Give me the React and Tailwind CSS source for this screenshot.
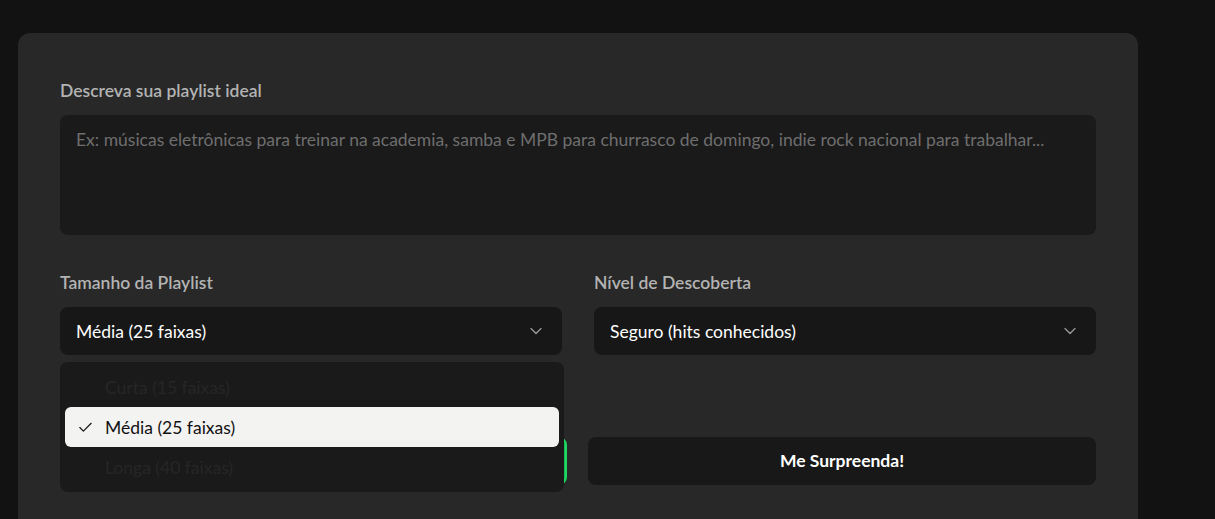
import React from "react";
import { ChevronDown, Check } from "lucide-react";

const font = { fontFamily: '"Segoe UI", Lato, "Noto Sans", sans-serif' };

function SelectBox({ label, value, open }) {
  return (
    <div className="relative">
      <label className="block text-[17.5px] leading-6 font-semibold text-[#b3b3b3] mb-3">
        {label}
      </label>
      <div className="flex items-center justify-between h-12 rounded-lg bg-[#171717] pl-4 pr-4 text-white text-[17.5px]">
        <span className="pt-[2px]">{value}</span>
        <ChevronDown size={20} strokeWidth={1.5} className="text-[#9a9a9a]" />
      </div>
      {open && (
        <div className="absolute left-0 top-[91px] w-[504px] z-10 rounded-lg bg-[#1a1a1a] p-[5px] text-[17.5px]">
          <div className="h-10 flex items-center pl-10 pt-[3px] text-[#262626]">Curta (15 faixas)</div>
          <div className="h-10 flex items-center rounded-md bg-[#f3f3f1] text-[#111]">
            <Check size={17} strokeWidth={1.6} className="ml-3 mr-[11px]" />
            <span className="pt-[3px]">Média (25 faixas)</span>
          </div>
          <div className="h-10 flex items-center pl-10 pt-[3px] text-[#262626]">Longa (40 faixas)</div>
        </div>
      )}
    </div>
  );
}

export default function App() {
  return (
    <div className="h-[519px] bg-[#121212] pt-[33px] pl-[18px] overflow-hidden" style={font}>
      <div className="w-[1120px] min-h-[520px] rounded-xl bg-[#282828] px-[42px] pt-[46px] pb-10">
        <label className="block text-[17.5px] leading-6 font-semibold text-[#b3b3b3] mb-3">
          Descreva sua playlist ideal
        </label>
        <textarea
          className="block w-full h-[120px] resize-none rounded-lg bg-[#1a1a1a] px-4 py-3 text-[17.5px] text-white placeholder-[#6e6e6e] outline-none"
          placeholder="Ex: músicas eletrônicas para treinar na academia, samba e MPB para churrasco de domingo, indie rock nacional para trabalhar..."
        />
        <div className="grid grid-cols-2 gap-8 mt-9">
          <SelectBox label="Tamanho da Playlist" value="Média (25 faixas)" open />
          <SelectBox label="Nível de Descoberta" value="Seguro (hits conhecidos)" />
        </div>
        <div className="grid grid-cols-2 gap-[22px] mt-[82px]">
          <button className="h-12 w-[507px] rounded-lg bg-[#1db954] border-2 border-[#1ed760] text-black font-bold text-[17.5px]">
            Gerar Playlist
          </button>
          <button className="h-12 ml-[-1px] rounded-lg bg-[#181818] text-white font-bold text-[17.5px]">
            Me Surpreenda!
          </button>
        </div>
      </div>
    </div>
  );
}
